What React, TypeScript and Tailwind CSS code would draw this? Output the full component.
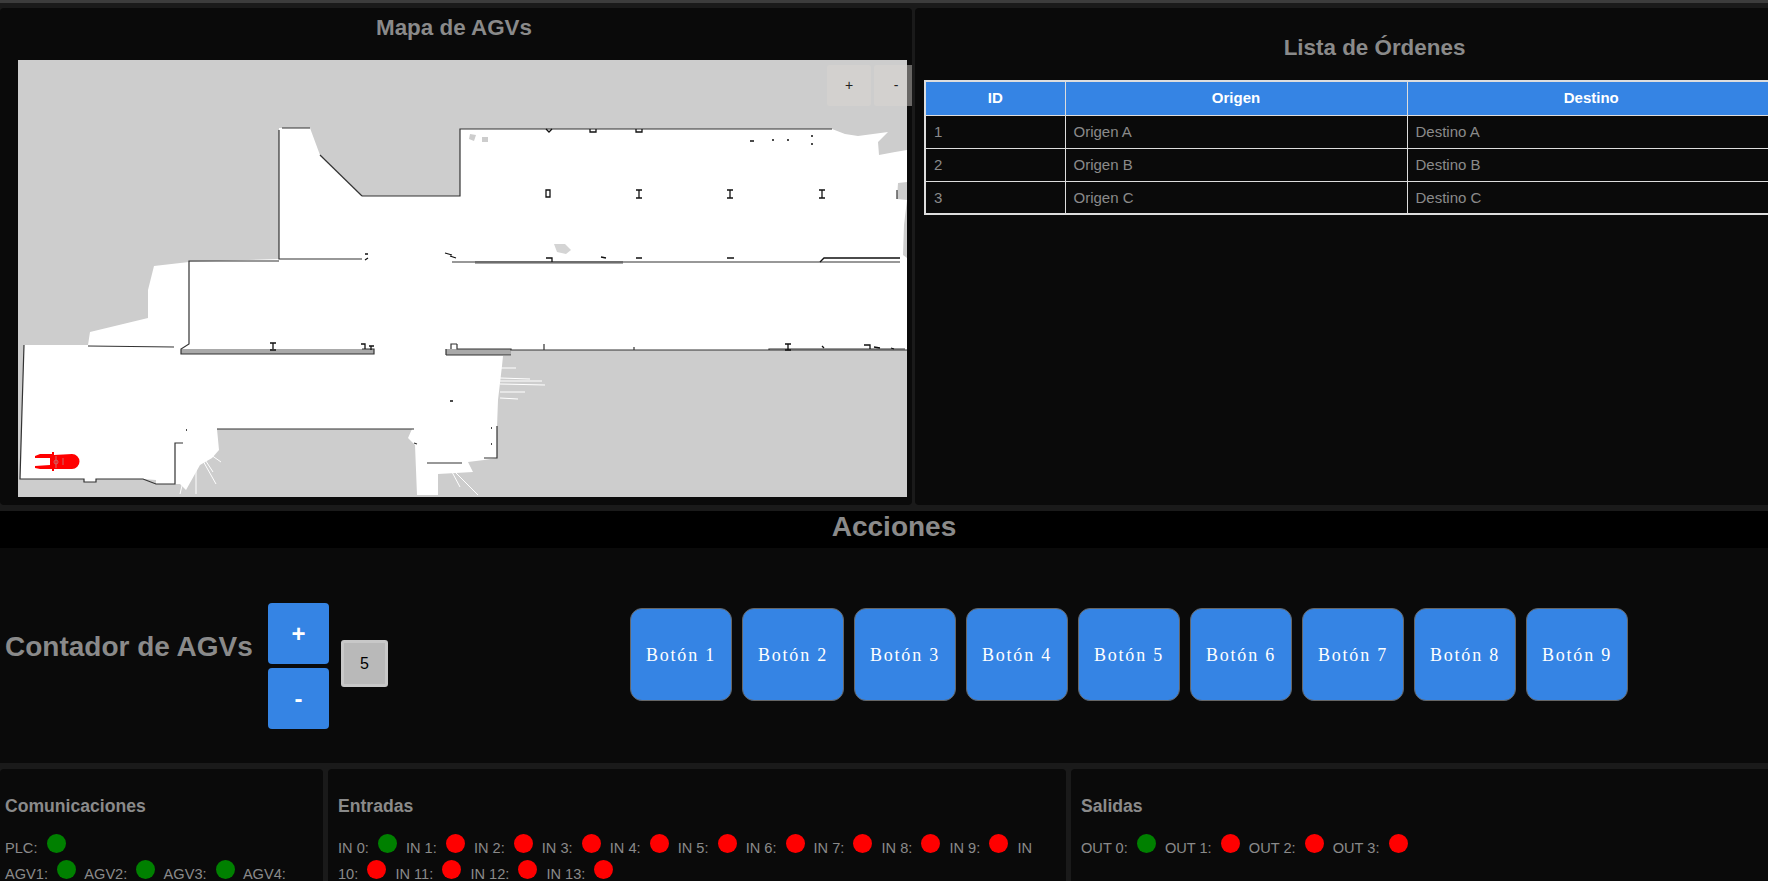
const rows = [
  { id: 1, origen: "Origen A", destino: "Destino A" },
  { id: 2, origen: "Origen B", destino: "Destino B" },
  { id: 3, origen: "Origen C", destino: "Destino C" },
];

const botones = ["Botón 1", "Botón 2", "Botón 3", "Botón 4", "Botón 5", "Botón 6", "Botón 7", "Botón 8", "Botón 9"];

const comunicaciones = ["AGV1", "AGV2", "AGV3", "AGV4", "AGV5", "AGV6"];
const entradas = [true, ...Array(13).fill(false)];
const salidas = [true, false, false, false];

function Dot({ on }: { on: boolean }) {
  return <span className={`inline-block w-[19px] h-[19px] mx-[5px] rounded-full ${on ? "bg-[#008000]" : "bg-[#ff0000]"}`} />;
}

function Signal({ label, on }: { label: string; on: boolean }) {
  return (
    <>
      {label}: <Dot on={on} />{" "}
    </>
  );
}

function MapaSvg() {
  return (
    <svg viewBox="18 60 889 437" className="w-[889px] h-[437px] block bg-[#cdcdcd]">
      {/* zona libre */}
      <path
        fill="#fff"
        d="M279 128 L310 128 L320 155 L330 165 L362 196 L460 196 L460 129 L832 129 L845 134 L858 136 L888 132 L878 142 L879 155 L895 152 L907 150 L907 182 L898 183 L897 199 L907 200 L904 225 L903 255 L907 258 L907 350 L511 350 L511 356 L503 356 L502 366 L498 400 L497 427 L497 458 L484 460 L468 462 L473 472 L438 474 L438 495 L417 495 L415 445 L408 438 L412 429 L217 429 L219 450 L212 458 L200 465 L186 490 L180 484 L175 484 L156 484 L156 480 L143 479 L96 479 L96 482 L84 482 L84 479 L20 479 L24 345 L88 345 L90 332 L148 318 L148 290 L154 266 L189 262 L279 259 Z"
      />
      {/* rayos */}
      <g stroke="#fff" strokeWidth="1" fill="none">
        <path d="M196 450 L196 494 M194 455 L181 484 M198 452 L216 484 M192 448 L184 470 M200 452 L213 472 M204 450 L221 462 M190 452 L180 494" />
        <path d="M500 368 L516 368 M500 378 L530 379 M500 384 L545 385 M500 392 L525 392 M500 398 L518 399 M500 381 L542 381" />
        <path d="M455 472 L478 495 M452 472 L460 487" />
      </g>
      {/* franjas grises */}
      <g fill="#a9a9a9">
        <rect x="181" y="349" width="193" height="5" />
        <rect x="446" y="349" width="65" height="6" />
        <rect x="475" y="261" width="148" height="3" />
      </g>
      <path fill="#d4d4d4" d="M554 244 L565 244 L571 250 L566 254 L557 252 Z" />
      <path fill="#cdcdcd" d="M470 134 L476 135 L474 141 L469 139 Z M482 137 L488 137 L488 142 L482 142 Z" />
      {/* muros */}
      <g stroke="#333" strokeWidth="1.2" fill="none">
        <path d="M282 128 L310 128 M279 130 L279 259 L362 259 M362 196 L460 196 L460 129 L832 129" />
        <path d="M320 155 L362 196" />
        <path d="M279 261 L189 261 L189 344 L181 349 L181 354 L374 354 L374 349 L362 349" />
        <path d="M452 262 L900 262" />
        <path d="M446 355 L511 355 M446 349 L446 355 M457 344 L451 344 L451 349 M457 344 L457 349 L511 349 L511 350 L907 350" />
        <path d="M88 346 L174 347 M24 345 L22 410 L20 479 L84 479 L84 482 L96 482 L96 479 L143 479 L156 484 L175 484 L175 443 L183 443" />
        <path d="M217 429 L414 429 M414 443 L417 444 M427 463 L462 463 M484 458 L497 458 L497 426" />
        <path d="M544 344 L544 350 M634 347 L634 350 M769 350 L769 349 L905 349 M897 199 L897 190" />
      </g>
      {/* columnas */}
      <g stroke="#111" strokeWidth="1.3" fill="none">
        <path d="M636 190 L642 190 M639 190 L639 198 M636 198 L642 198" />
        <path d="M727 190 L733 190 M730 190 L730 198 M727 198 L733 198" />
        <path d="M819 190 L825 190 M822 190 L822 198 M819 198 L825 198" />
        <path d="M546 190 L550 190 L550 197 L546 197 Z" />
        <path d="M270 343 L276 343 M273 343 L273 349 M270 350 L276 350" />
        <path d="M361 344 L365 344 L365 349 M369 346 L374 346 M371 346 L371 350" />
        <path d="M785 344 L791 344 M788 344 L788 350 M785 350 L791 350" />
        <path d="M864 345 L870 345 L870 349 M822 346 L824 348 M874 347 L880 348 M891 348 L894 349" />
        <path d="M546 258 L552 258 L552 262 M601 257 L606 258 M636 258 L642 258 M727 258 L734 258 M820 262 L824 258 L900 258" />
        <path d="M546 129 L549 132 L552 129 M590 129 L590 132 L596 132 L596 129 M636 129 L636 132 L642 132 L642 129" />
        <path d="M750 141 L754 141 M772 140 L774 140 M787 140 L789 140 M811 136 L813 136 M811 144 L813 144" />
        <path d="M368 258 L365 260 M365 254 L368 254 M445 253 L452 255 M450 256 L456 258" />
        <path d="M450 401 L453 401 M186 430 L187 430 M491 428 L492 428 M491 444 L492 444" />
      </g>
      {/* AGV */}
      <g fill="#ff0000">
        <path d="M35 456 L40 454 L52 454 L52 452 L54 452 L54 455 L72 454 A7.5 7.5 0 0 1 72 469 L54 469 L54 471 L52 471 L52 469 L40 469 L35 468 L35 466 L50 465 L50 458 L35 458 Z" />
      </g>
      <g stroke="#c66" strokeWidth="1" fill="none">
        <circle cx="56" cy="462" r="2" />
        <path d="M56 456 L56 468 M63 458 L63 465" />
      </g>
    </svg>
  );
}

export default function App() {
  return (
    <div className="w-[1768px] h-[881px] overflow-hidden bg-[#1a1a1a] font-['Liberation_Sans',Arial,sans-serif] text-[#8a8a8a] text-[14.6px]">
      <div className="w-[1840px]">
        <div className="h-[3px] bg-[#3c3c3c]" />

        {/* fila superior */}
        <div className="flex gap-[3px] mt-[5px] h-[497px]">
          <div className="relative shrink-0 w-[912px] bg-[#0a0a0a] rounded-[4px] overflow-hidden pl-[18px]">
            <h2 className="w-[872px] text-center text-[22.4px] font-bold leading-[28px] pt-[6px] h-[52px]">Mapa de AGVs</h2>
            <MapaSvg />
            <div className="absolute top-[57px] left-[827px] flex gap-[3px] text-[#222] text-[14px]">
              <button className="w-[44px] h-[41px] rounded-[2px] bg-[rgba(217,213,210,0.46)]">+</button>
              <button className="w-[44px] h-[41px] rounded-[2px] bg-[rgba(217,213,210,0.46)]">-</button>
            </div>
          </div>
          <div className="shrink-0 w-[918px] bg-[#0a0a0a] rounded-[4px] pl-[9px] text-[15px]">
            <h2 className="text-center text-[22.4px] font-bold leading-[28px] pt-[26px] h-[72px] pr-[8px]">Lista de Órdenes</h2>
            <table className="w-[853px] table-fixed border-collapse border-2 border-[#dddddd]">
              <thead>
                <tr className="h-[34px] bg-[#3584e4] text-white font-bold">
                  <th className="w-[140px] border border-[#dddddd]">ID</th>
                  <th className="w-[342px] border border-[#dddddd]">Origen</th>
                  <th className="border border-[#dddddd]">Destino</th>
                </tr>
              </thead>
              <tbody>
                {rows.map((r) => (
                  <tr key={r.id} className="h-[33px]">
                    <td className="border border-[#dddddd] px-[8px] pt-[1px]">{r.id}</td>
                    <td className="border border-[#dddddd] px-[8px] pt-[1px]">{r.origen}</td>
                    <td className="border border-[#dddddd] px-[8px] pt-[1px]">{r.destino}</td>
                  </tr>
                ))}
              </tbody>
            </table>
          </div>
        </div>

        {/* acciones */}
        <div className="mt-[6px] w-[1788px] h-[252px] bg-[#0a0a0a]">
          <h2 className="h-[37px] bg-black text-center text-[28px] font-bold leading-[32px]">Acciones</h2>
          <div className="flex h-[215px]">
            <div className="flex items-start w-[630px] pl-[5px]">
              <span className="text-[28px] font-bold leading-[32px] w-[263px] mt-[83px]">Contador de AGVs</span>
              <div className="flex flex-col gap-[4px] w-[61px] mt-[55px]">
                <button className="h-[61px] rounded-[4px] bg-[#3584e4] text-white font-bold text-[24px]">+</button>
                <button className="h-[61px] rounded-[4px] bg-[#3584e4] text-white font-bold text-[24px]">-</button>
              </div>
              <div className="ml-[12px] mt-[92px] w-[47px] h-[47px] flex items-center justify-center rounded-[3px] border-[3px] border-[#c8c8c8] bg-[#b9b9b9] text-black text-[16px]">5</div>
            </div>
            <div className="flex items-start gap-[10px] pt-[60px]">
              {botones.map((b) => (
                <button key={b} className="w-[102px] h-[93px] pt-[2px] rounded-[12px] border border-[#666] bg-[#3584e4] text-white font-['Liberation_Serif',serif] text-[18px] tracking-[1.8px]">{b}</button>
              ))}
            </div>
          </div>
        </div>

        {/* estados */}
        <div className="flex gap-[5px] mt-[6px] h-[200px] w-[1788px]">
          <div className="shrink-0 w-[323px] bg-[#0a0a0a] rounded-[4px] px-[5px]">
            <h3 className="text-[17.6px] font-bold pt-[27px] mb-[18px] leading-[20px]">Comunicaciones</h3>
            <div>
              <Signal label="PLC" on={true} />
              <br />
              {comunicaciones.map((c) => <Signal key={c} label={c} on={true} />)}
            </div>
          </div>
          <div className="shrink-0 w-[738px] bg-[#0a0a0a] rounded-[4px] px-[10px]">
            <h3 className="text-[17.6px] font-bold pt-[27px] mb-[18px] leading-[20px]">Entradas</h3>
            <div>
              {entradas.map((on, i) => <Signal key={i} label={`IN ${i}`} on={on} />)}
            </div>
          </div>
          <div className="flex-1 bg-[#0a0a0a] rounded-[4px] px-[10px]">
            <h3 className="text-[17.6px] font-bold pt-[27px] mb-[18px] leading-[20px]">Salidas</h3>
            <div>
              {salidas.map((on, i) => <Signal key={i} label={`OUT ${i}`} on={on} />)}
            </div>
          </div>
        </div>
      </div>
    </div>
  );
}
